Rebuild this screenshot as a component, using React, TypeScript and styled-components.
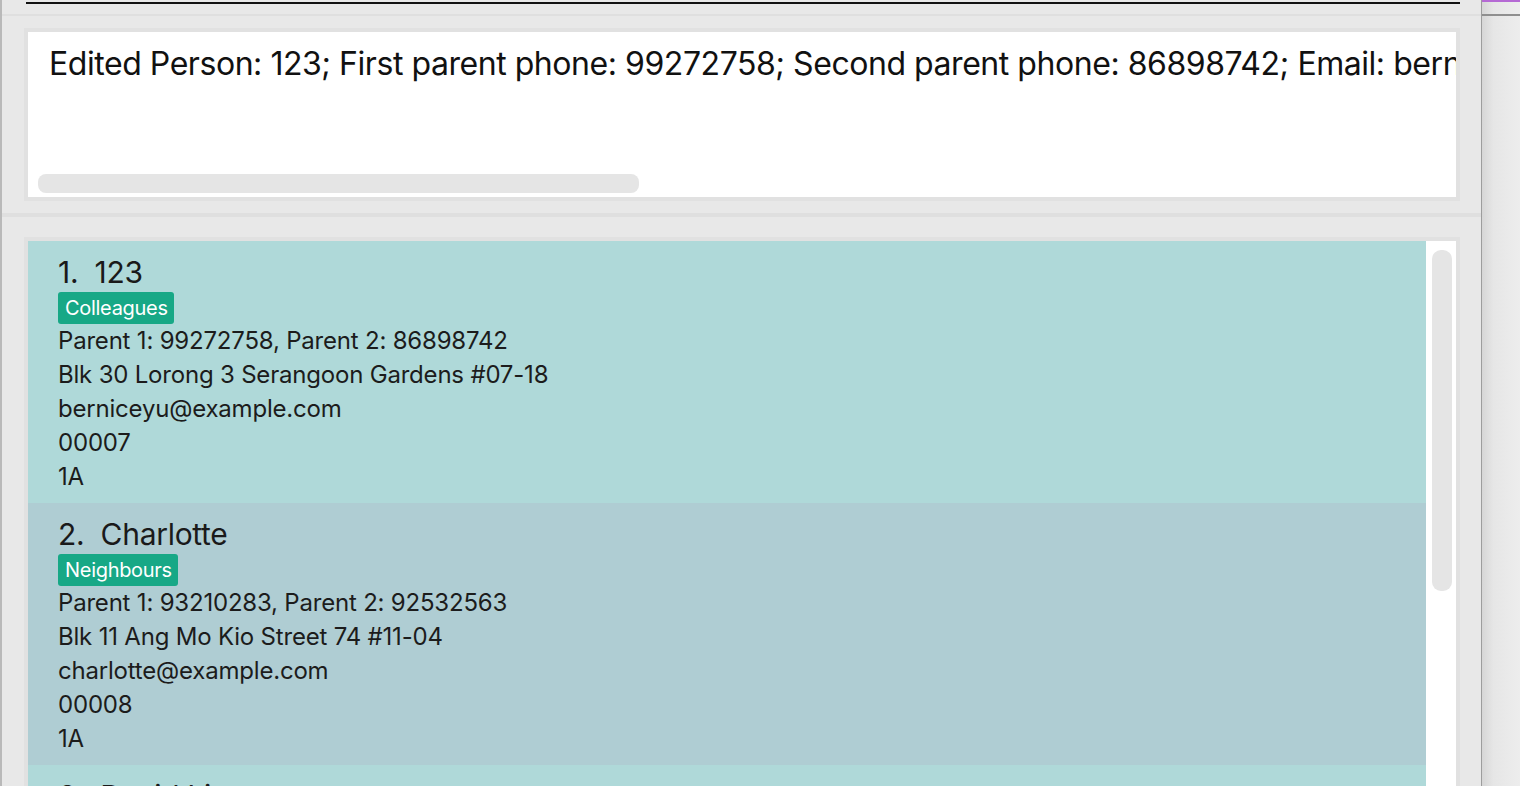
import React from 'react';
import styled, { createGlobalStyle } from 'styled-components';

type Person = {
  name: string;
  tag: string;
  parents: string;
  address: string;
  email: string;
  id: string;
  className: string;
};

const persons: Person[] = [
  {
    name: '123',
    tag: 'Colleagues',
    parents: 'Parent 1: 99272758, Parent 2: 86898742',
    address: 'Blk 30 Lorong 3 Serangoon Gardens #07-18',
    email: 'berniceyu@example.com',
    id: '00007',
    className: '1A',
  },
  {
    name: 'Charlotte',
    tag: 'Neighbours',
    parents: 'Parent 1: 93210283, Parent 2: 92532563',
    address: 'Blk 11 Ang Mo Kio Street 74 #11-04',
    email: 'charlotte@example.com',
    id: '00008',
    className: '1A',
  },
  {
    name: 'David Li',
    tag: 'Family',
    parents: 'Parent 1: 91031282, Parent 2: 91234567',
    address: 'Blk 436 Serangoon Gardens Street 26 #16-43',
    email: 'lidavid@example.com',
    id: '00009',
    className: '1A',
  },
];

const resultText =
  'Edited Person: 123; First parent phone: 99272758; Second parent phone: 86898742; Email: berniceyu@example.com; Address: Blk 30 Lorong 3 Serangoon Gardens #07-18; Tags: [Colleagues]';

function App() {
  return (
    <>
      <GlobalStyle />
      <Page>
        <Window>
          <CommandStrip>
            <CommandLine />
          </CommandStrip>
          <ResultPane>
            <ResultBox>
              <ResultText>{resultText}</ResultText>
              <HScrollTrack>
                <HScrollThumb />
              </HScrollTrack>
            </ResultBox>
          </ResultPane>
          <ListPane>
            <ListBox>
              <Cards>
                {persons.map((p, i) => (
                  <Card key={p.id} $alt={i % 2 === 1}>
                    <Title>{`${i + 1}.  ${p.name}`}</Title>
                    <Tags>
                      <Tag>{p.tag}</Tag>
                    </Tags>
                    <Line>{p.parents}</Line>
                    <Line>{p.address}</Line>
                    <Line>{p.email}</Line>
                    <Line>{p.id}</Line>
                    <Line>{p.className}</Line>
                  </Card>
                ))}
              </Cards>
              <VScrollTrack>
                <VScrollThumb />
              </VScrollTrack>
            </ListBox>
          </ListPane>
        </Window>
        <Desktop />
      </Page>
    </>
  );
}

const GlobalStyle = createGlobalStyle`
  html, body {
    margin: 0;
    padding: 0;
    overflow: hidden;
  }
  body {
    font-family: Inter, "Noto Sans", sans-serif;
    color: #1c1c1c;
  }
`;

const Page = styled.div`
  display: flex;
  width: 1520px;
  height: 786px;
  overflow: hidden;
`;

const Window = styled.div`
  width: 1479px;
  flex-shrink: 0;
  display: flex;
  flex-direction: column;
  background: #e8e8e8;
  border-left: 2px solid #b9b9b9;
  border-right: 1px solid #9d9d9d;
  overflow: hidden;
`;

const CommandStrip = styled.div`
  flex-shrink: 0;
  height: 16px;
  padding: 2px 0 0 24px;
  box-sizing: border-box;
  border-bottom: 2px solid #dfdfdf;
`;

const CommandLine = styled.div`
  width: 1434px;
  height: 2px;
  background: #111;
`;

const ResultPane = styled.div`
  flex-shrink: 0;
  padding: 12px 0 12px 22px;
  border-bottom: 4px solid #dfdfdf;
`;

const ResultBox = styled.div`
  width: 1428px;
  height: 165px;
  border: 4px solid #e1e1e1;
  background: #fff;
  display: flex;
  flex-direction: column;
  overflow: hidden;
`;

const ResultText = styled.div`
  flex: 1;
  padding: 12px 0 0 21px;
  font-size: 32px;
  line-height: 40px;
  white-space: nowrap;
  color: #111;
  letter-spacing: -0.45px;
`;

const HScrollTrack = styled.div`
  padding: 0 0 4px 10px;
`;

const HScrollThumb = styled.div`
  width: 601px;
  height: 19px;
  border-radius: 8px;
  background: #e5e5e5;
`;

const ListPane = styled.div`
  flex: 1;
  min-height: 0;
  padding: 20px 0 0 22px;
  overflow: hidden;
`;

const ListBox = styled.div`
  width: 1428px;
  height: 600px;
  border: 4px solid #e1e1e1;
  border-bottom: none;
  background: #fff;
  display: flex;
`;

const Cards = styled.div`
  width: 1398px;
  display: flex;
  flex-direction: column;
`;

const Card = styled.div<{ $alt: boolean }>`
  flex-shrink: 0;
  padding: 13px 0 9px 30px;
  background: ${(p) => (p.$alt ? '#afcdd3' : '#afd9d9')};
`;

const Title = styled.div`
  font-size: 30px;
  line-height: 36px;
  white-space: pre;
  color: #1a1a1a;
  letter-spacing: -0.3px;
`;

const Tags = styled.div`
  display: flex;
  gap: 6px;
  margin-top: 2px;
`;

const Tag = styled.span`
  height: 32px;
  padding: 0 6px 0 7px;
  border-radius: 3px;
  background: #17a886;
  color: #fff;
  font-size: 20px;
  line-height: 32px;
  letter-spacing: -0.3px;
`;

const Line = styled.div`
  font-size: 24px;
  line-height: 34px;
  color: #1c1c1c;
  letter-spacing: -0.2px;
`;

const VScrollTrack = styled.div`
  flex: 1;
  padding: 9px 0 0 6px;
`;

const VScrollThumb = styled.div`
  width: 20px;
  height: 341px;
  border-radius: 9px;
  background: #e5e5e5;
`;

const Desktop = styled.div`
  flex: 1;
  position: relative;
  background: linear-gradient(90deg, #d6d6d6 0%, #e6e6e6 30%, #ededed 100%);
  border-top: 2px solid #b56ad4;

  &::after {
    content: '';
    position: absolute;
    left: 0;
    right: 0;
    top: 12px;
    height: 2px;
    background: #8f8f8f;
  }
`;

export default App;
